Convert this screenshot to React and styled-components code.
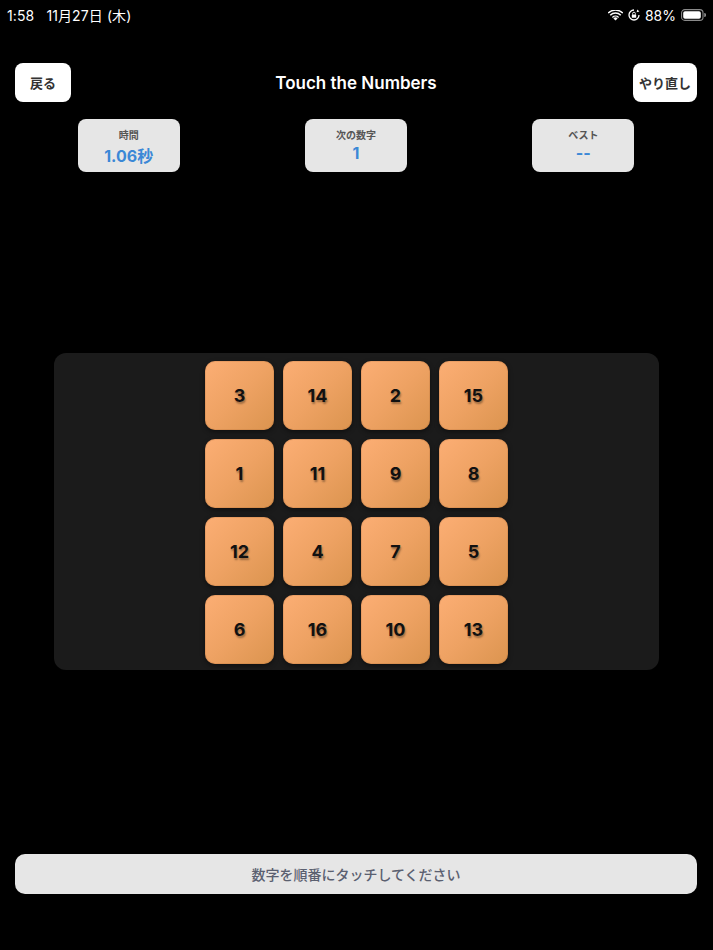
import styled, { createGlobalStyle } from 'styled-components';

const GlobalStyle = createGlobalStyle`
  html, body {
    margin: 0;
    padding: 0;
    background: #000;
  }
  body {
    font-family: Inter, "Noto Sans CJK JP", sans-serif;
  }
`;

const tiles = [3, 14, 2, 15, 1, 11, 9, 8, 12, 4, 7, 5, 6, 16, 10, 13];

const stats = [
  { label: '時間', value: '1.06秒' },
  { label: '次の数字', value: '1' },
  { label: 'ベスト', value: '--' },
];

const WifiIcon = () => (
  <svg width="15" height="11" viewBox="0 0 15 11">
    <path d="M7.5 10.6 L5.4 8.4 A3 3 0 0 1 9.6 8.4 Z" fill="#fff" />
    <path d="M3.9 6.9 A5.1 5.1 0 0 1 11.1 6.9 L10.1 7.9 A3.7 3.7 0 0 0 4.9 7.9 Z" fill="#fff" />
    <path d="M1.7 4.7 A8.2 8.2 0 0 1 13.3 4.7 L12.2 5.8 A6.7 6.7 0 0 0 2.8 5.8 Z" fill="#fff" />
    <path d="M-0.3 2.6 A11 11 0 0 1 15.3 2.6 L14.3 3.6 A9.6 9.6 0 0 0 0.7 3.6 Z" fill="#fff" />
  </svg>
);

const RotationLockIcon = () => (
  <svg width="12" height="12" viewBox="0 0 12 12">
    <path d="M6 1 A5 5 0 1 0 11 6" fill="none" stroke="#fff" strokeWidth="1.3" />
    <path d="M9.3 0.4 L11.4 2.4 L8.6 3.2 Z" fill="#fff" />
    <rect x="3.8" y="5.4" width="4.4" height="3.4" rx="0.6" fill="#fff" />
    <path d="M4.6 5.6 V4.6 A1.4 1.4 0 0 1 7.4 4.6 V5.6" fill="none" stroke="#fff" strokeWidth="0.9" />
  </svg>
);

const BatteryIcon = () => (
  <svg width="25" height="12" viewBox="0 0 25 12">
    <rect x="0.6" y="0.6" width="21.4" height="10.8" rx="3.2" fill="none" stroke="#8a8a8a" strokeWidth="1.1" />
    <rect x="2.2" y="2.2" width="17.6" height="7.6" rx="1.8" fill="#fff" />
    <path d="M23.2 4 A2 2 0 0 1 23.2 8 Z" fill="#8a8a8a" />
  </svg>
);

const App = () => {
  return (
    <Screen>
      <GlobalStyle />
      <StatusBar>
        <StatusLeft>1:58&nbsp;&nbsp; 11月27日 (木)</StatusLeft>
        <StatusRight>
          <WifiIcon />
          <RotationLockIcon />
          <span>88%</span>
          <BatteryIcon />
        </StatusRight>
      </StatusBar>

      <Header>
        <NavButton>戻る</NavButton>
        <Title>Touch the Numbers</Title>
        <NavButton $right>やり直し</NavButton>
      </Header>

      <StatsRow>
        {stats.map((s) => (
          <StatCard key={s.label}>
            <StatLabel>{s.label}</StatLabel>
            <StatValue>{s.value}</StatValue>
          </StatCard>
        ))}
      </StatsRow>

      <BoardArea>
        <Board>
          <Grid>
            {tiles.map((n) => (
              <Tile key={n}>{n}</Tile>
            ))}
          </Grid>
        </Board>
      </BoardArea>

      <MessageBar>数字を順番にタッチしてください</MessageBar>
    </Screen>
  );
};

const Screen = styled.div`
  height: 950px;
  background: #000;
  display: flex;
  flex-direction: column;
  overflow: hidden;
`;

const StatusBar = styled.div`
  height: 30px;
  display: flex;
  align-items: center;
  justify-content: space-between;
  padding: 0 7px 0 7px;
  color: #fff;
  font-size: 14px;
  font-family: Inter, "Noto Sans CJK JP", sans-serif;
`;

const StatusLeft = styled.span`
  letter-spacing: 0.1px;
`;

const StatusRight = styled.div`
  display: flex;
  align-items: center;
  gap: 5px;
  font-size: 14px;
`;

const Header = styled.div`
  display: grid;
  grid-template-columns: 1fr auto 1fr;
  align-items: center;
  padding: 33px 16px 0 15px;
`;

const NavButton = styled.button`
  justify-self: ${(p) => (p.$right ? 'end' : 'start')};
  height: 39px;
  padding: 0 6px;
  min-width: 56px;
  border: none;
  border-radius: 8px;
  background: #fff;
  color: #333;
  font-family: "Noto Sans CJK JP", sans-serif;
  font-size: 13px;
  font-weight: 600;
`;

const Title = styled.h1`
  margin: 0;
  color: #fff;
  font-size: 17px;
  font-weight: 600;
`;

const StatsRow = styled.div`
  display: flex;
  justify-content: space-around;
  padding: 17px 16px 0 15px;
`;

const StatCard = styled.div`
  width: 102px;
  height: 53px;
  box-sizing: border-box;
  border-radius: 8px;
  background: #e6e6e6;
  display: flex;
  flex-direction: column;
  align-items: center;
  padding-top: 8px;
  gap: 1px;
`;

const StatLabel = styled.span`
  font-size: 10px;
  font-weight: 600;
  color: #555;
`;

const StatValue = styled.span`
  font-size: 16px;
  font-weight: 700;
  color: #3b88d6;
`;

const BoardArea = styled.div`
  flex: 1;
  display: flex;
  align-items: center;
  justify-content: center;
  padding-bottom: 3px;
`;

const Board = styled.div`
  width: 605px;
  box-sizing: border-box;
  padding: 8px 0 6px;
  border-radius: 12px;
  background: #1b1b1b;
  display: flex;
  justify-content: center;
`;

const Grid = styled.div`
  display: grid;
  grid-template-columns: repeat(4, 69px);
  grid-auto-rows: 69px;
  gap: 9px;
`;

const Tile = styled.div`
  border-radius: 10px;
  background: linear-gradient(135deg, #fcae74 0%, #eea263 50%, #db944f 100%);
  box-shadow: 0 2px 5px rgba(0, 0, 0, 0.45), inset 0 0 0 1px rgba(120, 60, 20, 0.12);
  display: flex;
  align-items: center;
  justify-content: center;
  color: #111;
  font-size: 18px;
  font-weight: 700;
  text-shadow: 1px 2px 2px rgba(0, 0, 0, 0.35);
`;

const MessageBar = styled.div`
  margin: 0 16px 56px 15px;
  height: 40px;
  border-radius: 10px;
  background: #e6e6e6;
  display: flex;
  align-items: center;
  justify-content: center;
  color: #5b6070;
  font-size: 14px;
  font-weight: 500;
`;

export default App;
